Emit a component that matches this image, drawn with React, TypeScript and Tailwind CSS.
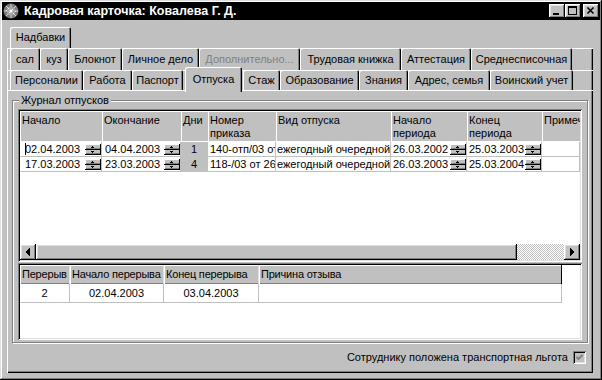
import React from 'react';

const raised =
  'shadow-[inset_-1px_-1px_#000,inset_1px_1px_#fff,inset_-2px_-2px_#808080,inset_2px_2px_#dfdfdf]';
const sunken =
  'shadow-[inset_1px_1px_#808080,inset_-1px_-1px_#fff,inset_2px_2px_#000,inset_-2px_-2px_#dfdfdf]';

type TabDef = { label: string; w: string; disabled?: boolean; active?: boolean };

const row2: TabDef[] = [
  { label: 'сал', w: 'w-[30px]' },
  { label: 'куз', w: 'w-[28px]' },
  { label: 'Блокнот', w: 'w-[54px]' },
  { label: 'Личное дело', w: 'w-[77px]' },
  { label: 'Дополнительно...', w: 'w-[101px]', disabled: true },
  { label: 'Трудовая книжка', w: 'w-[101px]' },
  { label: 'Аттестация', w: 'w-[70px]' },
  { label: 'Среднесписочная', w: 'w-[101px]' },
];

const row3: TabDef[] = [
  { label: 'Персоналии', w: 'w-[73px]' },
  { label: 'Работа', w: 'w-[49px]' },
  { label: 'Паспорт', w: 'w-[51px]' },
  { label: 'Отпуска', w: 'w-[60px]', active: true },
  { label: 'Стаж', w: 'w-[37px]' },
  { label: 'Образование', w: 'w-[79px]' },
  { label: 'Знания', w: 'w-[49px]' },
  { label: 'Адрес, семья', w: 'w-[82px]' },
  { label: 'Воинский учет', w: 'w-[83px]' },
];

const Tab: React.FC<{ tab: TabDef }> = ({ tab }) => {
  if (tab.active) {
    return (
      <div className={`relative h-full flex-none ${tab.w}`}>
        <div className="absolute -top-[3px] left-[2px] z-10 flex h-[25px] w-[57px] items-start justify-center rounded-t-[2px] bg-[#c0c0c0] pt-[4px] shadow-[inset_1px_1px_#fff,inset_-1px_0_#000,inset_-2px_0_#808080]">
          {tab.label}
        </div>
      </div>
    );
  }
  return (
    <div
      className={`flex h-full flex-none items-center justify-center rounded-t-[2px] shadow-[inset_1px_1px_#fff,inset_-1px_0_#000,inset_-2px_0_#808080] ${tab.w} ${
        tab.disabled ? 'text-[#808080]' : 'text-black'
      }`}
    >
      {tab.label}
    </div>
  );
};

const AppIcon = () => (
  <svg width="16" height="16" viewBox="0 0 16 16" className="flex-none">
    <circle cx="8" cy="8" r="7.5" fill="#7a7a7a" />
    <g stroke="#d8d8d8" strokeWidth="1">
      <path d="M8 1v14M1 8h14M3 3l10 10M13 3L3 13" />
    </g>
    <circle cx="8" cy="8" r="4.5" fill="#a8a8a8" />
    <g fill="#e8e8e8">
      <rect x="5" y="5" width="1" height="1" />
      <rect x="9" y="6" width="1" height="1" />
      <rect x="6" y="9" width="1" height="1" />
      <rect x="10" y="10" width="1" height="1" />
      <rect x="3" y="7" width="1" height="1" />
      <rect x="12" y="8" width="1" height="1" />
    </g>
    <circle cx="8" cy="8" r="1.5" fill="#fff" />
  </svg>
);

const TitleButton: React.FC<{ kind: 'min' | 'max' | 'close'; className?: string }> = ({ kind, className }) => (
  <div className={`flex h-[14px] w-[16px] items-center justify-center bg-[#c0c0c0] ${raised} ${className ?? ''}`}>
    <svg width="16" height="14" viewBox="0 0 16 14" shapeRendering="crispEdges">
      {kind === 'min' && <rect x="4" y="9" width="6" height="2" fill="#000" />}
      {kind === 'max' && (
        <g fill="#000">
          <rect x="3" y="2" width="9" height="2" />
          <rect x="3" y="2" width="1" height="9" />
          <rect x="11" y="2" width="1" height="9" />
          <rect x="3" y="10" width="9" height="1" />
        </g>
      )}
      {kind === 'close' && (
        <path d="M4.5 3.5l6 6M10.5 3.5l-6 6" stroke="#000" strokeWidth="1.6" shapeRendering="auto" />
      )}
    </svg>
  </div>
);

const Spin = () => (
  <svg width="16" height="11" viewBox="0 0 16 11" className="flex-none" shapeRendering="crispEdges">
    <rect width="16" height="11" fill="#c0c0c0" />
    <rect x="0" y="0" width="15" height="1" fill="#fff" />
    <rect x="0" y="0" width="1" height="5" fill="#fff" />
    <rect x="0" y="5" width="16" height="1" fill="#000" />
    <rect x="15" y="0" width="1" height="11" fill="#000" />
    <rect x="0" y="10" width="16" height="1" fill="#000" />
    <rect x="1" y="4" width="14" height="1" fill="#808080" />
    <rect x="0" y="6" width="1" height="4" fill="#fff" />
    <rect x="1" y="9" width="14" height="1" fill="#808080" />
    <rect x="7" y="2" width="1" height="1" fill="#000" />
    <rect x="6" y="3" width="3" height="1" fill="#000" />
    <rect x="6" y="7" width="3" height="1" fill="#000" />
    <rect x="7" y="8" width="1" height="1" fill="#000" />
  </svg>
);

const ArrowButton: React.FC<{ dir: 'left' | 'right' }> = ({ dir }) => (
  <div className={`flex h-[16px] w-[16px] flex-none items-center justify-center bg-[#c0c0c0] ${raised}`}>
    <svg width="16" height="16" viewBox="0 0 16 16" shapeRendering="crispEdges">
      <path
        fill="#000"
        d={
          dir === 'left'
            ? 'M9 4h1v8h-1z M8 5h1v6h-1z M7 6h1v4h-1z M6 7h1v2h-1z'
            : 'M6 4h1v8h-1z M7 5h1v6h-1z M8 6h1v4h-1z M9 7h1v2h-1z'
        }
      />
    </svg>
  </div>
);

const topCols = [
  { h: 'Начало', w: 'w-[82px]' },
  { h: 'Окончание', w: 'w-[79px]' },
  { h: 'Дни', w: 'w-[27px]' },
  { h: 'Номер\nприказа', w: 'w-[68px]' },
  { h: 'Вид отпуска', w: 'w-[115px]' },
  { h: 'Начало\nпериода', w: 'w-[76px]' },
  { h: 'Конец\nпериода', w: 'w-[75px]' },
  { h: 'Примечание', w: 'w-[38px]' },
];

const leaves = [
  {
    start: '02.04.2003',
    end: '04.04.2003',
    days: '1',
    order: '140-отп/03 от 01.04.2003',
    kind: 'ежегодный очередной',
    pStart: '26.03.2002',
    pEnd: '25.03.2003',
    caret: true,
  },
  {
    start: '17.03.2003',
    end: '23.03.2003',
    days: '4',
    order: '118-/03 от 26.02.2003',
    kind: 'ежегодный очередной',
    pStart: '26.03.2003',
    pEnd: '25.03.2004',
    caret: false,
  },
];

const cell = 'flex-none overflow-hidden whitespace-nowrap border-r border-b border-[#c0c0c0]';

const DateCell: React.FC<{ w: string; value: string; caret?: boolean; pl: string }> = ({ w, value, caret, pl }) => (
  <div className={`${cell} ${w} ${pl} flex items-center justify-between`}>
    <span className="flex items-center">
      {caret && <span className="-mr-[1px] inline-block h-[12px] w-px bg-black" />}
      {value}
    </span>
    <Spin />
  </div>
);

const breakCols = [
  { h: 'Перерыв', w: 'w-[50px]', v: '2' },
  { h: 'Начало перерыва', w: 'w-[94px]', v: '02.04.2003' },
  { h: 'Конец перерыва', w: 'w-[95px]', v: '03.04.2003' },
  { h: 'Причина отзыва', w: 'w-[303px]', v: '' },
];

export default function App() {
  return (
    <div className="h-[380px] w-[602px] bg-[#c0c0c0] p-[2px] font-['Liberation_Sans',Arial,sans-serif] text-[11px] text-black shadow-[inset_-1px_-1px_#000,inset_1px_1px_#dfdfdf,inset_-2px_-2px_#808080,inset_2px_2px_#fff]">
      {/* title bar */}
      <div className="flex h-[18px] items-center bg-black pl-[1px] pr-[1px]">
        <AppIcon />
        <span className="ml-[5px] text-[12.5px] font-bold leading-none text-white">
          Кадровая карточка: Ковалева Г. Д.
        </span>
        <div className="ml-auto flex items-center">
          <TitleButton kind="min" />
          <TitleButton kind="max" className="mr-[2px]" />
          <TitleButton kind="close" />
        </div>
      </div>

      <div className="mt-[7px] pl-[5px] pr-[7px]">
        {/* tabs */}
        <div className="flex h-[21px] pl-[3px]">
          <Tab tab={{ label: 'Надбавки', w: 'w-[61px]' }} />
        </div>
        <div className="shadow-[inset_1px_0_#fff,inset_-1px_0_#000,inset_-2px_0_#808080]">
          <div className="flex h-[22px] pl-[3px] shadow-[inset_0_1px_#fff]">
            {row2.map((t) => (
              <Tab key={t.label} tab={t} />
            ))}
          </div>
          <div className="flex h-[20px] pl-[3px] shadow-[inset_0_1px_#fff]">
            {row3.map((t) => (
              <Tab key={t.label} tab={t} />
            ))}
          </div>
        </div>

        {/* page */}
        <div className="h-[283px] px-[5px] pt-[10px] shadow-[inset_1px_1px_#fff,inset_-1px_-1px_#000,inset_-2px_-2px_#808080]">
          <div className="relative h-[243px] border border-[#808080] px-[5px] pt-[8px] shadow-[inset_1px_1px_#fff,1px_1px_#fff]">
            <span className="absolute -top-[8px] left-[6px] bg-[#c0c0c0] px-[2px] leading-[14px]">
              Журнал отпусков
            </span>

            {/* leave grid */}
            <div className={`flex h-[153px] flex-col bg-white p-[2px] ${sunken}`}>
              <div className="flex h-[31px] flex-none">
                {topCols.map((c) => (
                  <div
                    key={c.h}
                    className={`flex-none overflow-hidden whitespace-pre border-b border-white bg-[#c0c0c0] pl-[2px] pt-[3px] leading-[13px] shadow-[inset_1px_1px_#fff] ${c.w}`}
                  >
                    {c.h}
                  </div>
                ))}
              </div>
              {leaves.map((r) => (
                <div key={r.start} className="flex h-[15px] flex-none leading-[14px]">
                  <DateCell w="w-[82px]" value={r.start} caret={r.caret} pl="pl-[5px]" />
                  <DateCell w="w-[79px]" value={r.end} pl="pl-[3px]" />
                  <div className={`${cell} w-[27px] bg-[#c0c0c0] text-center`}>{r.days}</div>
                  <div className={`${cell} w-[68px] pl-[2px]`}>{r.order}</div>
                  <div className={`${cell} w-[115px] pl-[1px]`}>{r.kind}</div>
                  <DateCell w="w-[76px]" value={r.pStart} pl="pl-[2px]" />
                  <DateCell w="w-[75px]" value={r.pEnd} pl="pl-[2px]" />
                  <div className={`${cell} w-[38px]`} />
                </div>
              ))}
              <div className="flex-1" />
              <div className="flex h-[16px] flex-none">
                <ArrowButton dir="left" />
                <div className={`h-[16px] w-[481px] flex-none bg-[#c0c0c0] ${raised}`} />
                <div className="h-[16px] flex-1 bg-[image:repeating-conic-gradient(#c0c0c0_0_25%,#ffffff_0_50%)] bg-[length:2px_2px]" />
                <ArrowButton dir="right" />
              </div>
            </div>

            {/* breaks grid */}
            <div className={`mt-[1px] flex h-[77px] flex-col bg-white p-[2px] ${sunken}`}>
              <div className="flex h-[19px] flex-none">
                {breakCols.map((c, i) => (
                  <div
                    key={c.h}
                    className={`flex-none overflow-hidden whitespace-nowrap bg-[#c0c0c0] pl-[2px] leading-[19px] tracking-[-0.2px] shadow-[inset_1px_1px_#fff,inset_0_-1px_#808080] ${c.w} ${
                      i === breakCols.length - 1 ? 'border-r border-black' : 'border-r border-[#dfdfdf]'
                    }`}
                  >
                    {c.h}
                  </div>
                ))}
              </div>
              <div className="flex h-[19px] flex-none">
                {breakCols.map((c) => (
                  <div key={c.h} className={`${cell} ${c.w} text-center leading-[18px]`}>
                    {c.v}
                  </div>
                ))}
              </div>
            </div>
          </div>

          {/* transport checkbox */}
          <div className="flex h-[28px] items-center justify-end gap-[5px] pr-[2px]">
            <span>Сотруднику положена транспортная льгота</span>
            <div className={`flex h-[13px] w-[13px] items-center justify-center bg-[#c0c0c0] ${sunken}`}>
              <svg width="7" height="7" viewBox="0 0 7 7">
                <path d="M0.5 3l2 2l4-4" stroke="#808080" strokeWidth="1.8" fill="none" />
              </svg>
            </div>
          </div>
        </div>
      </div>
    </div>
  );
}
